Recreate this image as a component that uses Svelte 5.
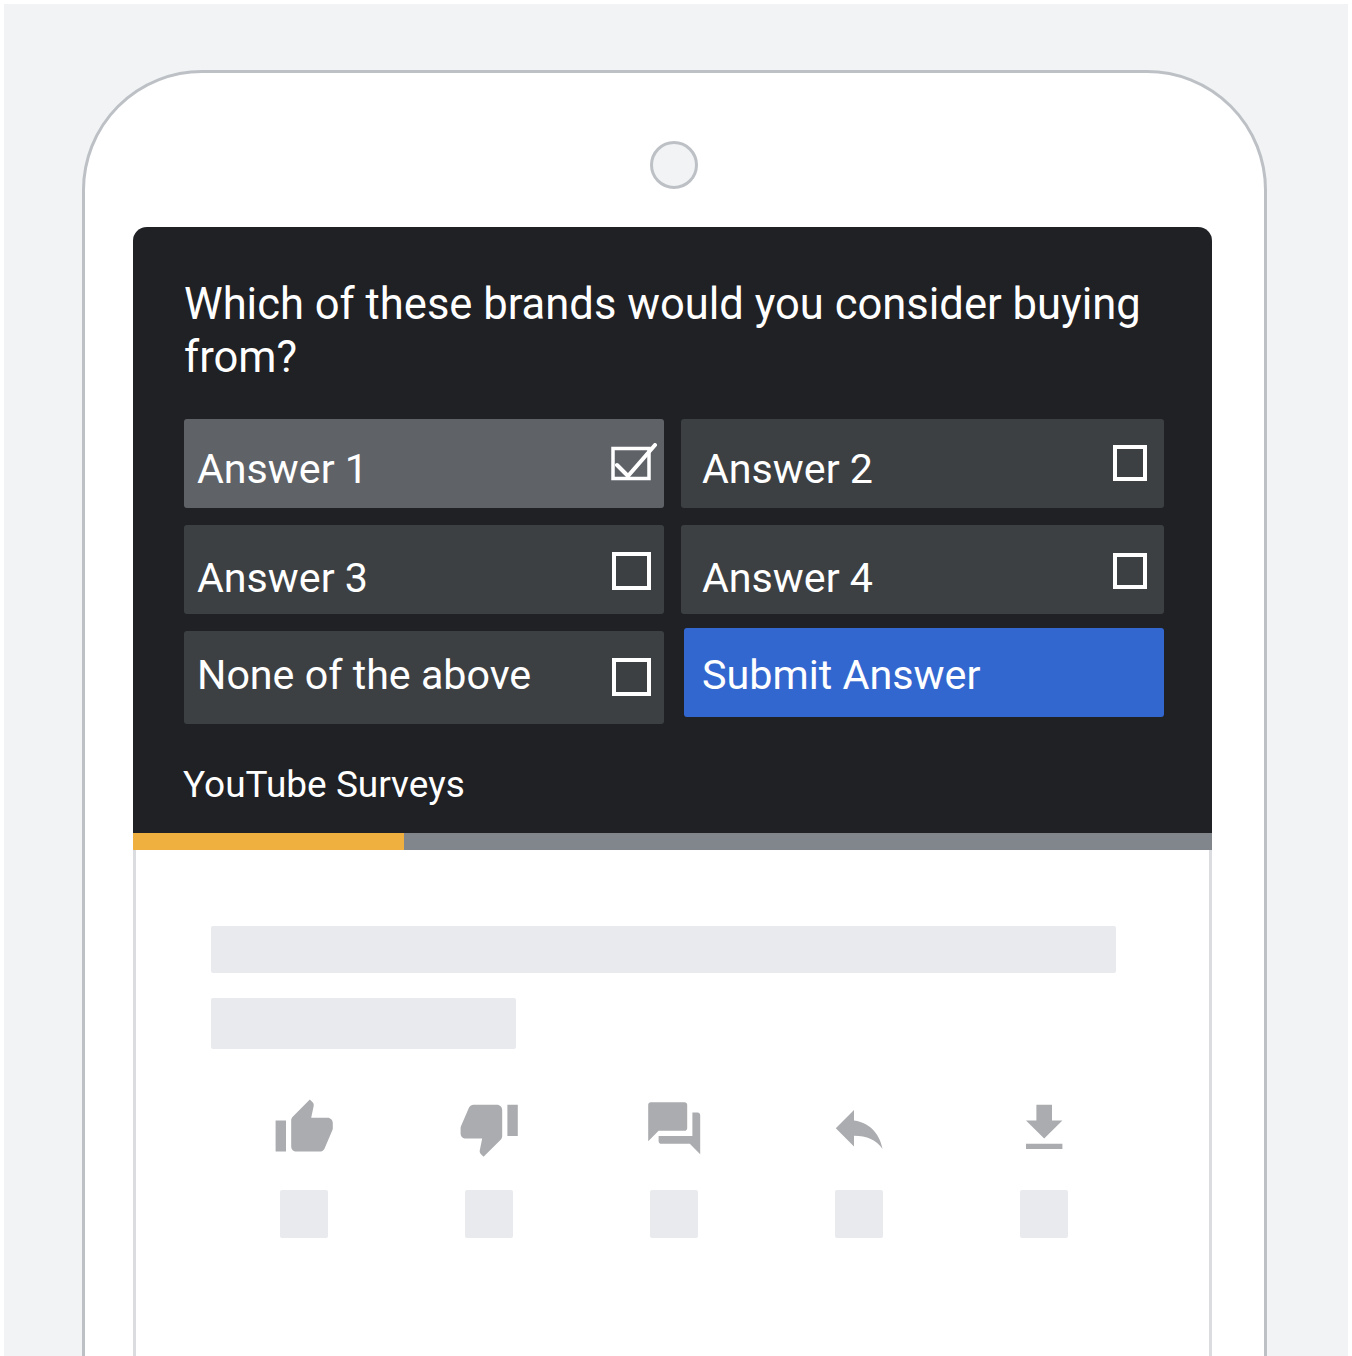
<script>
  let answers = [
    { label: "Answer 1", checked: true, cls: "left" },
    { label: "Answer 2", checked: false, cls: "right" },
    { label: "Answer 3", checked: false, cls: "left mid" },
    { label: "Answer 4", checked: false, cls: "right mid" },
    { label: "None of the above", checked: false, cls: "left last" }
  ];

  let actions = [
    "M1 21h4V9H1v12zm22-11c0-1.1-.9-2-2-2h-6.31l.95-4.57.03-.32c0-.41-.17-.79-.44-1.06L14.17 1 7.59 7.59C7.22 7.95 7 8.45 7 9v10c0 1.1.9 2 2 2h9c.83 0 1.54-.5 1.84-1.22l3.02-7.05c.09-.23.14-.47.14-.73v-2z",
    "M15 3H6c-.83 0-1.54.5-1.84 1.22l-3.02 7.05c-.09.23-.14.47-.14.73v2c0 1.1.9 2 2 2h6.31l-.95 4.57-.03.32c0 .41.17.79.44 1.06L9.83 23l6.59-6.59c.36-.36.58-.86.58-1.41V5c0-1.1-.9-2-2-2zm4 0v12h4V3h-4z",
    "M21 6h-2v9H6v2c0 .55.45 1 1 1h11l4 4V7c0-.55-.45-1-1-1zm-4 6V3c0-.55-.45-1-1-1H3c-.55 0-1 .45-1 1v14l4-4h10c.55 0 1-.45 1-1z",
    "M10 9V5l-7 7 7 7v-4.1c5 0 8.5 1.6 11 5.1-1-5-4-10-11-11z",
    "M19 9h-4V3H9v6H5l7 7 7-7zM5 18v2h14v-2H5z"
  ];
</script>

<div class="page">
  <div class="panel">
    <div class="phone">
      <div class="camera"></div>
      <div class="card">
        <div class="survey">
          <h1>Which of these brands would you consider buying from?</h1>
          <div class="grid">
            {#each answers as a}
              <div class="answer {a.cls}" class:selected={a.checked}>
                <span class="label">{a.label}</span>
                {#if a.checked}
                  <svg class="tick" width="46" height="38" viewBox="0 0 46 38">
                    <path d="M2 5.500H38V35.500H2Z" fill="none" stroke="#fff" stroke-width="3.500" />
                    <path d="M6 22L17 33L44 2" fill="none" stroke="#fff" stroke-width="4" stroke-linecap="round" />
                  </svg>
                {:else}
                  <span class="box"></span>
                {/if}
              </div>
            {/each}
            <div class="submit">Submit Answer</div>
          </div>
          <div class="brand">YouTube Surveys</div>
        </div>
        <div class="progress"><div class="fill"></div></div>
        <div class="video">
          <div class="line long"></div>
          <div class="line short"></div>
          <div class="actions">
            {#each actions as d}
              <div class="action">
                <svg width="62.400" height="62.400" viewBox="0 0 24 24"><path {d} fill="#aaacaf" /></svg>
                <div class="square"></div>
              </div>
            {/each}
          </div>
        </div>
      </div>
    </div>
  </div>
</div>

<style>
  :global(body) {
    background: #fff;
  }

  * {
    box-sizing: border-box;
  }

  .page {
    height: 1356px;
    padding: 4px 4px 0;
    overflow: hidden;
    font-family: Roboto, "Liberation Sans", sans-serif;
    background: #fff;
  }

  .panel {
    height: 1352px;
    padding: 66px 81px 0 78px;
    overflow: hidden;
    background: #f1f3f4;
  }

  .phone {
    height: 1400px;
    padding: 68px 52px 0 48px;
    background: #fff;
    border: 3px solid #bdc1c6;
    border-radius: 120px 120px 0 0;
  }

  .camera {
    width: 48px;
    height: 48px;
    margin: 0 auto 38px;
    background: #f1f3f4;
    border: 3px solid #bdc1c6;
    border-radius: 50%;
    transform: translateX(1px);
  }

  .card {
    height: 1200px;
    background: #fff;
    border: solid #dadce0;
    border-width: 0 3px;
    border-radius: 14px 14px 0 0;
  }

  .survey {
    height: 606px;
    margin: 0 -3px;
    padding: 51px 46px 0 51px;
    color: #fff;
    background: #202124;
    border-radius: 14px 14px 0 0;
  }

  h1 {
    margin: 0;
    font-size: 43.550px;
    font-weight: 400;
    line-height: 53px;
  }

  .grid {
    position: relative;
    display: grid;
    grid-template-columns: 480px 483px;
    grid-template-rows: 89px 89px 93px;
    gap: 17px;
    margin-top: 35px;
  }

  .answer {
    display: flex;
    align-items: center;
    justify-content: space-between;
    padding: 0 13px 0 13px;
    background: #3c4043;
    border-radius: 3px;
  }

  .answer.selected {
    background: #5f6368;
  }

  .answer.right {
    padding: 0 17px 0 21px;
  }

  .label {
    padding-top: 10px;
    font-size: 41.200px;
    line-height: 50px;
  }

  .mid .label {
    padding-top: 16px;
  }

  .last .label {
    padding-top: 0;
    margin-top: -6px;
  }

  .box {
    display: block;
    width: 39px;
    height: 38px;
    margin-top: -1px;
    border: 4px solid #fff;
  }

  .right .box {
    width: 34px;
    height: 36px;
  }

  .mid .box {
    margin-top: 3px;
  }

  .last .box {
    margin-top: -1px;
  }

  .tick {
    margin: -4px -6px 0 0;
  }

  .submit {
    display: flex;
    align-items: center;
    margin: -3px 0 7px 3px;
    padding: 4px 0 0 18px;
    font-size: 41.300px;
    background: #3367d0;
    border-radius: 3px;
  }

  .brand {
    margin: 39px 0 0 -1px;
    font-size: 37px;
    line-height: 44px;
  }

  .progress {
    height: 17px;
    margin: 0 -3px;
    background: #80868b;
  }

  .fill {
    width: 271px;
    height: 100%;
    background: #f0b040;
  }

  .video {
    padding: 76px 0 0 75px;
  }

  .line {
    background: #e8eaed;
    border-radius: 2px;
  }

  .long {
    width: 905px;
    height: 47px;
  }

  .short {
    width: 305px;
    height: 51px;
    margin-top: 25px;
  }

  .actions {
    display: flex;
    gap: 137px;
    margin: 48px 0 0 69px;
  }

  .action {
    display: flex;
    flex-direction: column;
    align-items: center;
    width: 48px;
  }

  .action svg {
    flex: none;
    margin: 0 -7px;
  }

  .square {
    width: 48px;
    height: 48px;
    margin-top: 30.600px;
    background: #e8eaed;
    border-radius: 2px;
  }
</style>
